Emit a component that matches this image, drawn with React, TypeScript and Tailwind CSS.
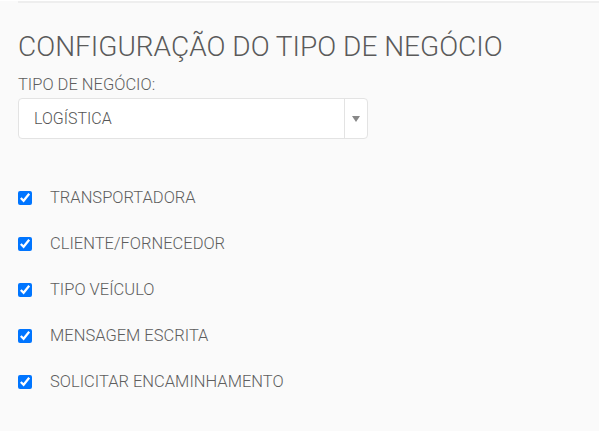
const items = [
  "TRANSPORTADORA",
  "CLIENTE/FORNECEDOR",
  "TIPO VEÍCULO",
  "MENSAGEM ESCRITA",
  "SOLICITAR ENCAMINHAMENTO",
];

const App = () => {
  return (
    <div className="min-h-[431px] w-full bg-[#fafafa] pl-[18px] font-['Roboto',sans-serif] text-[#5e5e5e]">
      <div className="h-[2px] mt-[1px] bg-[#eeeeee]"></div>
      <h1 className="mt-[27px] text-[28px] leading-[34px] font-light text-[#5a5a5a]">
        CONFIGURAÇÃO DO TIPO DE NEGÓCIO
      </h1>
      <div className="mt-[11px] text-[16.5px] leading-[20px] font-light">TIPO DE NEGÓCIO:</div>
      <div className="mt-[3px] flex h-[41px] w-[350px] items-stretch rounded border border-[#e3e3e3] bg-white">
        <div className="flex flex-1 items-center pl-[15px] text-[16px] font-light text-[#555]">LOGÍSTICA</div>
        <div className="flex w-[23px] items-center justify-center border-l border-[#e3e3e3]">
          <svg width="8" height="6" viewBox="0 0 8 6">
            <path d="M0 0h8L4 6z" fill="#888" />
          </svg>
        </div>
      </div>
      <div className="mt-[49px] flex flex-col gap-[26px]">
        {items.map((item) => (
          <label key={item} className="flex h-[20px] items-center">
            <input type="checkbox" checked readOnly className="m-0 h-[14px] w-[14px] accent-[#0075ff]" />
            <span className="ml-[18px] text-[16.5px] font-light">{item}</span>
          </label>
        ))}
      </div>
    </div>
  );
};

export default App;
